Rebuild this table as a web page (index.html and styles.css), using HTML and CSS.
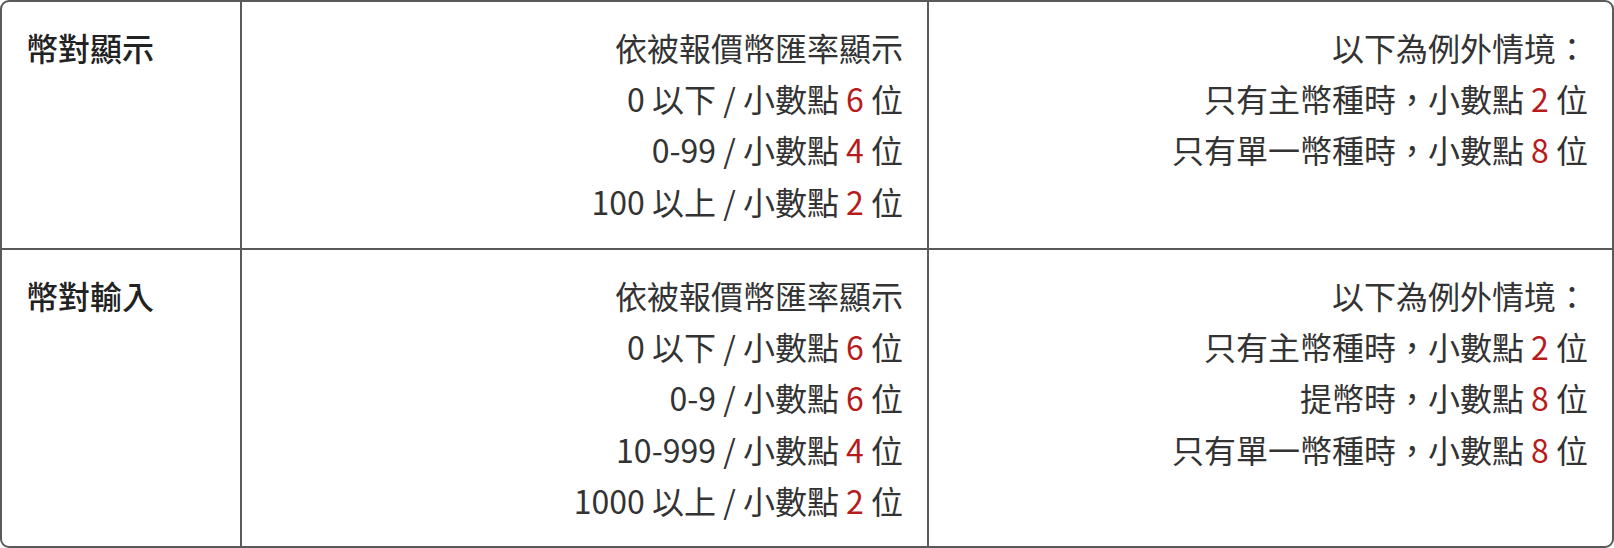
FILE: index.html
```html
<!DOCTYPE html>
<html lang="zh-Hant">
<head>
<meta charset="utf-8">
<link rel="stylesheet" href="styles.css">
</head>
<body>
<div class="table">
  <div class="row">
    <div class="cell head">幣對顯示</div>
    <div class="cell body">
      <div>依被報價幣匯率顯示</div>
      <div>0 以下 / 小數點 <span class="num">6</span> 位</div>
      <div>0-99 / 小數點 <span class="num">4</span> 位</div>
      <div>100 以上 / 小數點 <span class="num">2</span> 位</div>
    </div>
    <div class="cell body">
      <div>以下為例外情境：</div>
      <div>只有主幣種時，小數點 <span class="num">2</span> 位</div>
      <div>只有單一幣種時，小數點 <span class="num">8</span> 位</div>
    </div>
  </div>
  <div class="row">
    <div class="cell head">幣對輸入</div>
    <div class="cell body">
      <div>依被報價幣匯率顯示</div>
      <div>0 以下 / 小數點 <span class="num">6</span> 位</div>
      <div>0-9 / 小數點 <span class="num">6</span> 位</div>
      <div>10-999 / 小數點 <span class="num">4</span> 位</div>
      <div>1000 以上 / 小數點 <span class="num">2</span> 位</div>
    </div>
    <div class="cell body">
      <div>以下為例外情境：</div>
      <div>只有主幣種時，小數點 <span class="num">2</span> 位</div>
      <div>提幣時，小數點 <span class="num">8</span> 位</div>
      <div>只有單一幣種時，小數點 <span class="num">8</span> 位</div>
    </div>
  </div>
</div>
</body>
</html>
```

FILE: styles.css
```css
html, body {
  margin: 0;
  padding: 0;
  background: #fff;
}
body {
  font-family: "Noto Sans CJK TC", "Noto Sans", sans-serif;
  color: #2b2b2b;
}
.table {
  width: 1614px;
  height: 548px;
  box-sizing: border-box;
  border: 2px solid #5a5a5a;
  border-radius: 9px;
  overflow: hidden;
  display: grid;
  grid-template-rows: 248px 1fr;
}
.row {
  display: grid;
  grid-template-columns: 240px 687px 1fr;
  border-bottom: 2px solid #5a5a5a;
  box-sizing: border-box;
}
.row:last-child {
  border-bottom: none;
}
.cell {
  box-sizing: border-box;
  padding: 20px 24px;
  font-size: 32px;
  line-height: 51.2px;
  border-right: 2px solid #5a5a5a;
}
.cell:last-child {
  border-right: none;
}
.head {
  font-weight: 500;
  color: #222;
}
.body {
  text-align: right;
  color: #333;
}
.num {
  color: #b71c1c;
}
```
